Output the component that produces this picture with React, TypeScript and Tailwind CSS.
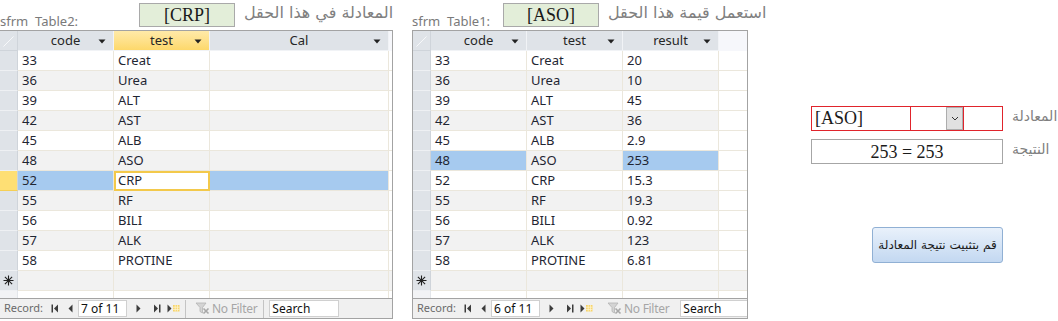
import React from "react"

type Row = { code: string; test: string; result: string }

const rows: Row[] = [
  { code: "33", test: "Creat", result: "20" },
  { code: "36", test: "Urea", result: "10" },
  { code: "39", test: "ALT", result: "45" },
  { code: "42", test: "AST", result: "36" },
  { code: "45", test: "ALB", result: "2.9" },
  { code: "48", test: "ASO", result: "253" },
  { code: "52", test: "CRP", result: "15.3" },
  { code: "55", test: "RF", result: "19.3" },
  { code: "56", test: "BILI", result: "0.92" },
  { code: "57", test: "ALK", result: "123" },
  { code: "58", test: "PROTINE", result: "6.81" },
]

interface Col {
  name: string
  width: number
  active?: boolean
  key: "code" | "test" | "result" | "cal"
}

const SortArrow = () => (
  <svg width="8" height="5" viewBox="0 0 8 5" className="absolute right-[7px] top-[8px]">
    <path d="M0.5 0.5 H7.5 L4 4.5 Z" fill="#222" />
  </svg>
)

const NewRowStar = () => (
  <svg width="11" height="11" viewBox="0 0 11 11">
    <path d="M5.5 0.5 V10.5 M0.5 5.5 H10.5 M1.9 1.9 L9.1 9.1 M9.1 1.9 L1.9 9.1" stroke="#222" strokeWidth="1.1" />
  </svg>
)

const NavIcon = ({ kind }: { kind: "first" | "prev" | "next" | "last" | "new" }) => {
  const c = "#3c3c3c"
  if (kind === "first")
    return (
      <svg width="8" height="9" viewBox="0 0 8 9">
        <rect x="0.5" y="0.5" width="1.5" height="8" fill={c} />
        <path d="M7 0.5 V8.5 L3 4.5 Z" fill={c} />
      </svg>
    )
  if (kind === "prev")
    return (
      <svg width="5" height="9" viewBox="0 0 5 9">
        <path d="M4.5 0.5 V8.5 L0.5 4.5 Z" fill={c} />
      </svg>
    )
  if (kind === "next")
    return (
      <svg width="5" height="9" viewBox="0 0 5 9">
        <path d="M0.5 0.5 V8.5 L4.5 4.5 Z" fill={c} />
      </svg>
    )
  if (kind === "last")
    return (
      <svg width="8" height="9" viewBox="0 0 8 9">
        <path d="M1 0.5 V8.5 L5 4.5 Z" fill={c} />
        <rect x="6" y="0.5" width="1.5" height="8" fill={c} />
      </svg>
    )
  return (
    <svg width="13" height="9" viewBox="0 0 13 9">
      <path d="M0.5 0.5 V8.5 L4.5 4.5 Z" fill={c} />
      <rect x="6" y="1" width="6.5" height="6.5" fill="#f7d36a" />
      <path d="M6 3.2 H12.5 M6 5.4 H12.5 M8.2 1 V7.5 M10.4 1 V7.5" stroke="#fff6d0" strokeWidth="0.8" />
    </svg>
  )
}

const FilterIcon = () => (
  <svg width="15" height="13" viewBox="0 0 15 13">
    <path d="M1 1 H11 L7.5 5.5 V11 L5 9.5 V5.5 Z" fill="#d4d4d4" stroke="#b4b4b4" strokeWidth="0.8" />
    <path d="M8.5 6.5 L13.5 11.5 M13.5 6.5 L8.5 11.5" stroke="#a8a8a8" strokeWidth="1.6" />
  </svg>
)

interface SheetProps {
  cols: Col[]
  filler: number
  selected: number
  current: "code" | "test" | "result" | "cal"
  focused: boolean
  record: string
  leftBorder?: boolean
}

const Datasheet: React.FC<SheetProps> = ({ cols, filler, selected, current, focused, record, leftBorder }) => {
  const bodyRows = [...rows.map((r) => ({ ...r, cal: "" })), null]

  return (
    <div
      className={`flex flex-col h-[289px] border-r border-b border-[#a3a3a3] ${leftBorder ? "border-l" : ""} bg-white overflow-hidden`}
    >
      {/* header */}
      <div className="flex h-[21px] border-t border-[#a3a3a3]">
        <div className="w-[18px] h-[20px] bg-[#dfe3e8] border-r border-b border-[#cfd4da] flex items-end justify-start pl-[3px] pb-[3px]">
          <svg width="11" height="11" viewBox="0 0 11 11">
            <path d="M0.5 10.5 L10.5 0.5" stroke="#f7f8fa" strokeWidth="1" />
          </svg>
        </div>
        {cols.map((c) => (
          <div
            key={c.name}
            style={{ width: c.width }}
            className={`relative h-[20px] border-r border-b border-[#f1f3f6] text-center text-[13px] leading-[19px] text-[#262626] ${
              c.active ? "bg-gradient-to-b from-[#ffeaa8] to-[#fdd86a]" : "bg-[#dfe3e8]"
            }`}
          >
            {c.name}
            <SortArrow />
          </div>
        ))}
        <div style={{ width: filler }} className="h-[20px] bg-[#f6f7fb]" />
      </div>

      {/* rows */}
      {bodyRows.map((r, i) => {
        const alt = i % 2 === 1
        const isSel = i === selected
        return (
          <div key={i} className="flex h-[20px]">
            <div
              className={`w-[18px] h-[20px] border-r border-b flex items-center justify-center ${
                isSel && focused ? "bg-[#fedf74] border-[#f5cf55]" : "bg-[#dfe3e8] border-[#eef0f3]"
              } border-r-[#cfd4da]`}
            >
              {r === null ? <NewRowStar /> : null}
            </div>
            {cols.map((c) => {
              const isCur = isSel && c.key === current
              let bg = alt ? "bg-[#f2f2f2]" : "bg-white"
              if (isSel && !isCur) bg = "bg-[#a6caef]"
              if (isSel && isCur && focused) bg = "bg-white"
              return (
                <div
                  key={c.name}
                  style={{ width: c.width }}
                  className={`h-[20px] border-r border-b border-[#ebe7dc] ${bg} px-[4px] text-[13px] leading-[19px] text-[#1f2633] whitespace-nowrap ${
                    isCur && focused ? "outline-2 outline-[#f3c94b] -outline-offset-2" : ""
                  }`}
                >
                  {r ? (r as Record<string, string>)[c.key] : ""}
                </div>
              )
            })}
            <div style={{ width: filler }} className={`h-[20px] border-b border-[#ebe7dc] ${i === 11 ? "bg-[#f2f2f2]" : "bg-white"}`} />
          </div>
        )
      })}

      {/* partial empty row */}
      <div className="flex h-[7px]">
        <div className="w-[18px] bg-[#f2f3f5] border-r border-[#e3e6ea]" />
        {cols.map((c) => (
          <div key={c.name} style={{ width: c.width }} className="border-r border-[#ebe7dc] bg-white" />
        ))}
        <div style={{ width: filler }} />
      </div>

      {/* navigation bar */}
      <div className="flex items-center h-[20px] border-t border-[#a3a3a3] bg-[#f0f0f0] font-['Noto_Sans',sans-serif] text-[11px] whitespace-nowrap">
        <span className="ml-[4px] text-[#6a6a6a]">Record:</span>
        <span className="ml-[8px] flex items-center">
          <NavIcon kind="first" />
        </span>
        <span className="ml-[9px] flex items-center">
          <NavIcon kind="prev" />
        </span>
        <div className="ml-[5px] w-[49px] h-[17px] shrink-0 bg-white border border-[#d0d0d0] pl-[2px] leading-[15px] text-[12px] text-[#111]">
          {record}
        </div>
        <span className="ml-[9px] flex items-center">
          <NavIcon kind="next" />
        </span>
        <span className="ml-[12px] flex items-center">
          <NavIcon kind="last" />
        </span>
        <span className="ml-[6px] flex items-center">
          <NavIcon kind="new" />
        </span>
        <div className="ml-[5px] w-px h-[18px] bg-[#c4c4c4]" />
        <span className="ml-[9px] flex items-center">
          <FilterIcon />
        </span>
        <span className="ml-[2px] text-[#a6a6a6] text-[12px] tracking-[-0.3px]">No Filter</span>
        <div className="ml-[6px] w-px h-[18px] bg-[#c4c4c4]" />
        <div className="ml-[5px] w-[70px] h-[17px] shrink-0 bg-white border border-[#d0d0d0] pl-[2px] leading-[15px] text-[12px] text-[#111]">
          Search
        </div>
      </div>
    </div>
  )
}

const Caption = ({ label, value, arabic, boxOffset }: { label: string; value: string; arabic: string; boxOffset: number }) => (
  <div className="flex items-start h-[30px]">
    <span
      style={{ width: boxOffset }}
      className="self-end text-[13px] leading-[17px] text-[#7a7a7a] font-['Noto_Sans',sans-serif] whitespace-nowrap shrink-0"
    >
      {label}
    </span>
    <div className="mt-[3px] w-[96px] h-[24px] shrink-0 bg-[#e3eed9] border border-[#a9a9a9] flex items-center justify-center font-['Liberation_Serif',serif] text-[18px] text-[#1a1a1a] leading-none">
      {value}
    </div>
    <span dir="rtl" className="ml-[9px] mt-[3px] text-[16px] leading-[20px] text-[#808080] font-['DejaVu_Sans',sans-serif] whitespace-nowrap">
      {arabic}
    </span>
  </div>
)

export default function App() {
  return (
    <div className="w-[1058px] h-[321px] bg-white flex overflow-hidden font-['Noto_Sans',sans-serif]">
      {/* sfrm Table2 */}
      <div className="flex flex-col w-[393px] shrink-0">
        <Caption label={"sfrm\u00a0 Table2:"} value="[CRP]" arabic="المعادلة في هذا الحقل" boxOffset={139} />
        <Datasheet
          cols={[
            { name: "code", width: 96, key: "code" },
            { name: "test", width: 96, key: "test", active: true },
            { name: "Cal", width: 179, key: "cal" },
          ]}
          filler={3}
          selected={6}
          current="test"
          focused
          record="7 of 11"
        />
      </div>

      {/* sfrm Table1 */}
      <div className="flex flex-col w-[336px] shrink-0 ml-[19px]">
        <Caption label={"sfrm\u00a0 Table1:"} value="[ASO]" arabic="استعمل قيمة هذا الحقل" boxOffset={91} />
        <Datasheet
          cols={[
            { name: "code", width: 96, key: "code" },
            { name: "test", width: 96, key: "test" },
            { name: "result", width: 96, key: "result" },
          ]}
          filler={28}
          selected={5}
          current="test"
          focused={false}
          record="6 of 11"
          leftBorder
        />
      </div>

      {/* equation form */}
      <div className="flex flex-col ml-[63px] pt-[106px]">
        <div className="flex items-start">
          <div className="flex w-[192px] h-[25px] border border-[#e0242c]">
            <div className="w-[99px] border-r border-[#e0242c] pl-[3px] font-['Liberation_Serif',serif] text-[18px] leading-[23px] text-[#1a1a1a]">
              [ASO]
            </div>
            <div className="w-[35px]" />
            <div className="w-[17px] h-[23px] bg-[#e1e1e1] border border-[#adadad] flex items-center justify-center">
              <svg width="8" height="5" viewBox="0 0 8 5">
                <path d="M1 1 L4 4 L7 1" stroke="#333" strokeWidth="1" fill="none" />
              </svg>
            </div>
            <div className="w-px bg-[#e0242c]" />
          </div>
          <span dir="rtl" className="ml-[9px] mt-[1px] text-[14px] leading-[18px] text-[#808080] font-['DejaVu_Sans',sans-serif] whitespace-nowrap">
            المعادلة
          </span>
        </div>
        <div className="flex items-start mt-[8px]">
          <div className="w-[192px] h-[25px] border border-[#a6a6a6] flex items-center justify-center font-['Liberation_Serif',serif] text-[18px] leading-none text-[#1a1a1a]">
            253 = 253
          </div>
          <span dir="rtl" className="ml-[9px] mt-[1px] text-[14px] leading-[18px] text-[#808080] font-['DejaVu_Sans',sans-serif] whitespace-nowrap">
            النتيجة
          </span>
        </div>
        <button
          dir="rtl"
          className="mt-[63px] ml-[61px] w-[131px] h-[36px] rounded-[3px] border border-[#90b0d4] bg-gradient-to-b from-[#e9f1fb] to-[#c3d8f1] text-[12px] text-[#1a1a1a] font-['DejaVu_Sans',sans-serif] whitespace-nowrap"
        >
          قم بتثبيت نتيجة المعادلة
        </button>
      </div>
    </div>
  )
}
